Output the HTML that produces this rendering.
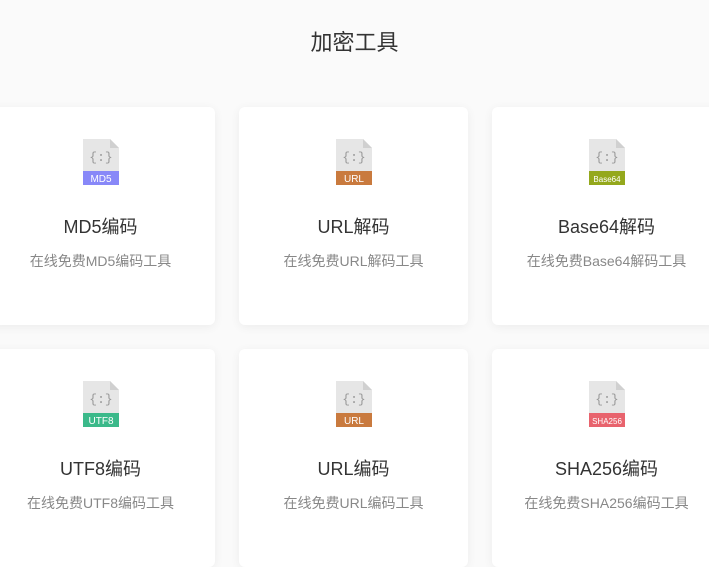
<!DOCTYPE html>
<html><head><meta charset="utf-8"><style>
body{margin:0;width:709px;height:543px;overflow:hidden;background:#fafafa;font-family:"Liberation Sans","Noto Sans CJK SC",sans-serif;position:relative}
h1{position:absolute;top:29px;left:0;width:709px;text-align:center;margin:0;font-weight:normal;font-size:22px;color:#333;line-height:28px}
.card{position:absolute;width:229px;height:218px;background:#fff;border-radius:6px;box-shadow:0 2px 10px rgba(0,0,0,0.06)}
.ic{position:absolute;left:97px;top:32px;width:36px;height:46px}
.t{position:absolute;top:106px;width:100%;text-align:center;font-size:18px;color:#333}
.d{position:absolute;top:144px;width:100%;text-align:center;font-size:14px;color:#888}
</style></head><body>
<h1>加密工具</h1>
<div id="c"></div>
<script>
var items=[[-14,107,"MD5","#8888f8","MD5编码","在线免费MD5编码工具"],[239,107,"URL","#c97a3e","URL解码","在线免费URL解码工具"],[492,107,"Base64","#94a81c","Base64解码","在线免费Base64解码工具"],[-14,349,"UTF8","#3bb98a","UTF8编码","在线免费UTF8编码工具"],[239,349,"URL","#c97a3e","URL编码","在线免费URL编码工具"],[492,349,"SHA256","#e8636d","SHA256编码","在线免费SHA256编码工具"]];
var h="";items.forEach(function(i){var fs=i[2].length>4?8:10;
h+='<div class="card" style="left:'+i[0]+'px;top:'+i[1]+'px"><svg class="ic" viewBox="0 0 36 46"><path d="M0 0H27L36 9V46H0Z" fill="#e6e6e6"/><path d="M27 0V9H36Z" fill="#d0d0d0"/><text x="18" y="22" font-size="13" fill="#999" text-anchor="middle" font-family="Liberation Mono,monospace">{:}</text><rect x="0" y="32" width="36" height="14" fill="'+i[3]+'"/><text x="18" y="43" font-size="'+fs+'" fill="#fff" text-anchor="middle" font-family="Liberation Sans,sans-serif">'+i[2]+'</text></svg><div class="t">'+i[4]+'</div><div class="d">'+i[5]+'</div></div>';});
document.getElementById("c").innerHTML=h;
</script>
</body></html>
